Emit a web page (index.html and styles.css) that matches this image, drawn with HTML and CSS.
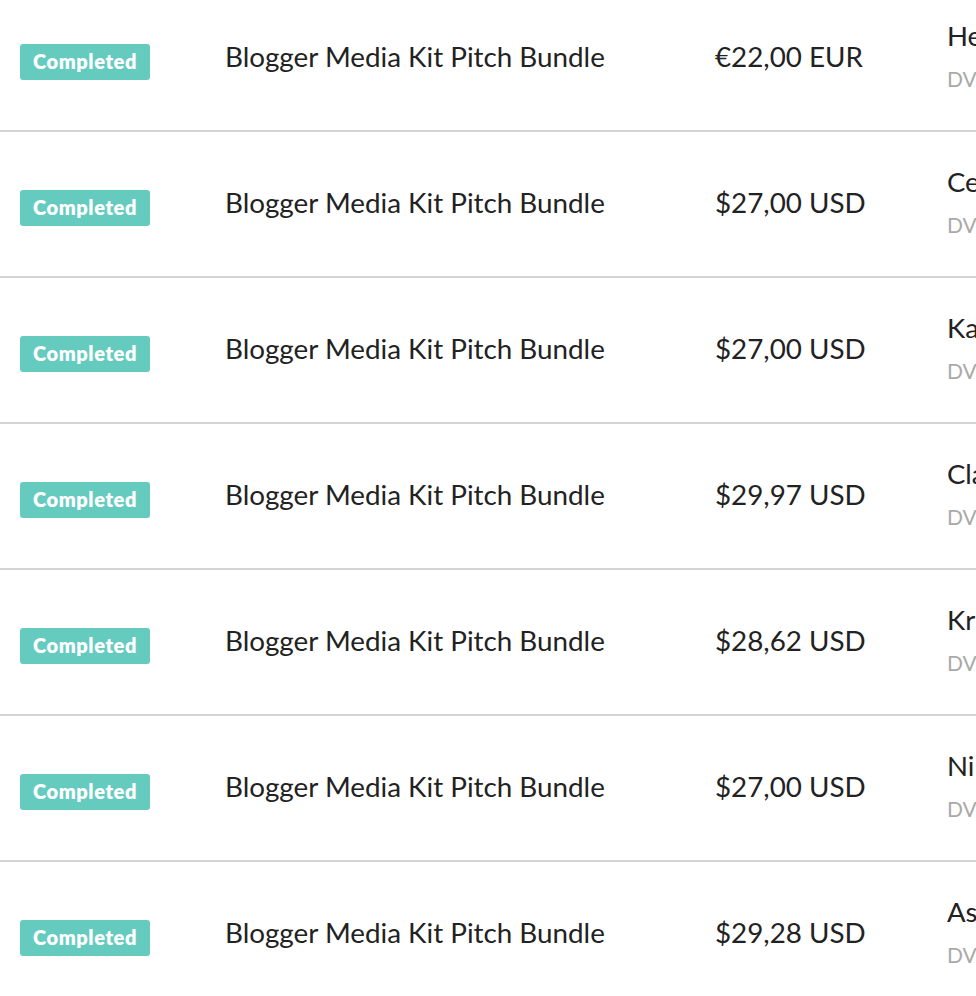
FILE: index.html
```html
<!DOCTYPE html>
<html>
<head>
<meta charset="utf-8">
<link rel="stylesheet" href="styles.css">
</head>
<body>
<div class="table">
  <div class="row">
    <div class="cell status"><span class="badge">Completed</span></div>
    <div class="cell product">Blogger Media Kit Pitch Bundle</div>
    <div class="cell price">€22,00 EUR</div>
    <div class="cell customer"><div class="name">Heather</div><div class="sub">DVD</div></div>
  </div>
  <div class="row">
    <div class="cell status"><span class="badge">Completed</span></div>
    <div class="cell product">Blogger Media Kit Pitch Bundle</div>
    <div class="cell price">$27,00 USD</div>
    <div class="cell customer"><div class="name">Celine</div><div class="sub">DVD</div></div>
  </div>
  <div class="row">
    <div class="cell status"><span class="badge">Completed</span></div>
    <div class="cell product">Blogger Media Kit Pitch Bundle</div>
    <div class="cell price">$27,00 USD</div>
    <div class="cell customer"><div class="name">Kate</div><div class="sub">DVD</div></div>
  </div>
  <div class="row">
    <div class="cell status"><span class="badge">Completed</span></div>
    <div class="cell product">Blogger Media Kit Pitch Bundle</div>
    <div class="cell price">$29,97 USD</div>
    <div class="cell customer"><div class="name">Clara</div><div class="sub">DVD</div></div>
  </div>
  <div class="row">
    <div class="cell status"><span class="badge">Completed</span></div>
    <div class="cell product">Blogger Media Kit Pitch Bundle</div>
    <div class="cell price">$28,62 USD</div>
    <div class="cell customer"><div class="name">Kristin</div><div class="sub">DVD</div></div>
  </div>
  <div class="row">
    <div class="cell status"><span class="badge">Completed</span></div>
    <div class="cell product">Blogger Media Kit Pitch Bundle</div>
    <div class="cell price">$27,00 USD</div>
    <div class="cell customer"><div class="name">Nikki</div><div class="sub">DVD</div></div>
  </div>
  <div class="row">
    <div class="cell status"><span class="badge">Completed</span></div>
    <div class="cell product">Blogger Media Kit Pitch Bundle</div>
    <div class="cell price">$29,28 USD</div>
    <div class="cell customer"><div class="name">Ashley</div><div class="sub">DVD</div></div>
  </div>
</div>
</body>
</html>
```
FILE: styles.css
```css
html, body {
  margin: 0;
  padding: 0;
  background: #ffffff;
  overflow: hidden;
}
body {
  font-family: "Lato", "Liberation Sans", sans-serif;
  color: #222222;
}
.table {
  margin-top: -14px;
}
.row {
  display: grid;
  grid-template-columns: 205px 490px 232px 1fr;
  align-items: center;
  height: 144px;
  padding-left: 20px;
  border-bottom: 2px solid #d4d4d4;
  white-space: nowrap;
  overflow: hidden;
}
.status {
  margin-top: 8px;
  display: flex;
}
.badge {
  display: inline-flex;
  align-items: center;
  justify-content: center;
  box-sizing: border-box;
  width: 130px;
  height: 36px;
  padding-bottom: 3px;
  border-radius: 3px;
  background: #66cbbf;
  color: #ffffff;
  font-weight: 800;
  font-size: 20px;
  letter-spacing: 0.6px;
}
.product, .price {
  font-size: 27.8px;
  line-height: 32px;
  margin-top: -3px;
}
.customer {
  display: flex;
  flex-direction: column;
  gap: 13.5px;
  margin-top: -3.6px;
}
.name {
  font-size: 27.5px;
  line-height: 32px;
}
.sub {
  font-size: 21px;
  line-height: 26px;
  color: #a9a9a9;
}
```
